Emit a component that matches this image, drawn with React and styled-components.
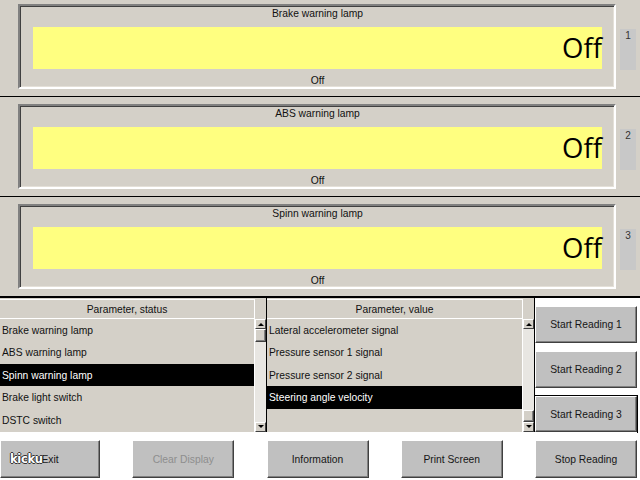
import React from 'react';
import styled, { createGlobalStyle } from 'styled-components';

const Global = createGlobalStyle`
  html, body { margin: 0; padding: 0; background: #ffffff; }
  body { font-family: "Liberation Sans", Arial, sans-serif; }
`;

const Screen = styled.div`
  position: relative;
  width: 640px;
  height: 480px;
  overflow: hidden;
  display: flex;
  flex-direction: column;
  background: #ffffff;
  font-family: "Liberation Sans", Arial, sans-serif;
  font-size: 10.3px;
  color: #000;
`;

const LampStack = styled.div`
  margin-top: -3px;
  display: flex;
  flex-direction: column;
`;

const LampPanel = styled.section`
  box-sizing: border-box;
  height: 100px;
  background: #d4d0c8;
  border-bottom: 1px solid #000;
  display: flex;
  align-items: flex-start;
  padding: 7px 0 0 18px;
`;

const LampBox = styled.div`
  box-sizing: border-box;
  width: 598px;
  height: 85px;
  border: 2px solid;
  border-color: #808080 #ffffff #ffffff #808080;
  box-shadow: inset 1px 1px #404040, inset -1px -1px #e4e0d8;
  display: flex;
  flex-direction: column;
  padding: 0 12px 0 13px;
`;

const LampTitle = styled.div`
  height: 21px;
  padding-top: 1px;
  box-sizing: border-box;
  line-height: 14px;
  text-align: center;
  color: #111;
`;

const LampDisplay = styled.div`
  height: 43px;
  background: #ffff80;
  display: flex;
  align-items: center;
  justify-content: flex-end;
  font-family: "Open Sans", "Noto Sans", sans-serif;
  font-size: 27.5px;
  line-height: 1;
  color: #000;
`;

const LampFooter = styled.div`
  margin-top: 6px;
  height: 12px;
  line-height: 12px;
  text-align: center;
  color: #111;
`;

const LampTab = styled.div`
  box-sizing: border-box;
  margin: 25px 0 0 4px;
  width: 16px;
  height: 41px;
  background: #c8c8c8;
  text-align: center;
  font-size: 10px;
  line-height: 12px;
  padding-top: 1px;
  color: #333;
`;

const DataArea = styled.div`
  box-sizing: border-box;
  height: 135px;
  border-top: 1px solid #000;
  display: grid;
  grid-template-columns: 267px 268px 1fr;
`;

const ListPane = styled.div`
  box-sizing: border-box;
  background: #d4d0c8;
  border-right: 1px solid #000;
  padding-top: 1px;
  display: grid;
  grid-template-columns: 1fr 12px;
  overflow: hidden;
`;

const ListBody = styled.div`
  display: flex;
  flex-direction: column;
`;

const ListHeader = styled.div`
  box-sizing: border-box;
  height: 20px;
  padding-top: 1px;
  line-height: 17px;
  border-top: 1px solid #ffffff;
  border-bottom: 1px solid #ffffff;
  text-align: center;
  color: #111;
`;

const ListRow = styled.div`
  box-sizing: border-box;
  height: 22.4px;
  padding-top: 2px;
  line-height: 20px;
  padding-left: 2px;
  white-space: nowrap;
  background: ${p => (p.$selected ? '#000' : 'transparent')};
  color: ${p => (p.$selected ? '#fff' : '#111')};
`;

const ScrollBar = styled.div`
  display: flex;
  flex-direction: column;
  border-left: 1px solid #ffffff;
  box-sizing: border-box;
`;

const ScrollHead = styled.div`
  height: 20px;
`;

const ScrollButton = styled.div`
  box-sizing: border-box;
  height: 10px;
  background: #d4d0c8;
  border: 1px solid;
  border-color: #ffffff #404040 #404040 #ffffff;
  display: flex;
  align-items: center;
  justify-content: center;
`;

const ScrollThumb = styled.div`
  box-sizing: border-box;
  height: ${p => p.$size}px;
  background: #d4d0c8;
  border: 1px solid;
  border-color: #ffffff #404040 #404040 #ffffff;
  box-shadow: inset -1px -1px #808080;
`;

const ScrollTrack = styled.div`
  flex: 1;
  background: #e8e6e2;
`;

const SideColumn = styled.div`
  background: #ffffff;
  display: flex;
  flex-direction: column;
  gap: 8px;
  padding: 8px 3px 0 0;
`;

const PanelButton = styled.button`
  box-sizing: border-box;
  width: ${p => p.$w}px;
  height: ${p => p.$h}px;
  margin: 0;
  padding: 0;
  background: #c0c0c0;
  border: 1px solid;
  border-color: #ffffff #404040 #404040 #ffffff;
  box-shadow: inset -1px -1px #808080${p => (p.$focused ? ', 0 0 0 1px #000' : '')};
  font-family: "Liberation Sans", Arial, sans-serif;
  font-size: 10.3px;
  color: ${p => (p.$disabled ? '#8e8e8e' : '#161616')};
  text-align: center;
  cursor: default;
`;

const BottomBar = styled.div`
  box-sizing: border-box;
  width: 637px;
  height: 48px;
  padding-top: 8px;
  display: flex;
  justify-content: space-between;
  align-items: flex-start;
  background: #ffffff;
`;

const Watermark = styled.div`
  position: absolute;
  left: 10px;
  top: 452px;
  font-family: "DejaVu Sans", sans-serif;
  font-weight: bold;
  font-size: 11.5px;
  color: #ffffff;
  text-shadow: 1px 0 #333, -1px 0 #333, 0 1px #333, 0 -1px #333;
  letter-spacing: -0.3px;
`;

const Arrow = ({ up }) => (
  <svg width="6" height="4" viewBox="0 0 6 4">
    <path d={up ? 'M0 4 L3 1 L6 4 Z' : 'M0 0 L3 3 L6 0 Z'} fill="#000" />
  </svg>
);

const lamps = [
  { name: 'Brake warning lamp', value: 'Off', tab: '1' },
  { name: 'ABS warning lamp', value: 'Off', tab: '2' },
  { name: 'Spinn warning lamp', value: 'Off', tab: '3' },
];

const statusRows = ['Brake warning lamp', 'ABS warning lamp', 'Spinn warning lamp', 'Brake light switch', 'DSTC switch'];
const valueRows = ['Lateral accelerometer signal', 'Pressure sensor 1 signal', 'Pressure sensor 2 signal', 'Steering angle velocity', ''];

const List = ({ title, rows, selected, thumbAtEnd }) => (
  <ListPane>
    <ListBody>
      <ListHeader>{title}</ListHeader>
      {rows.map((r, i) => (
        <ListRow key={i} $selected={i === selected}>{r}</ListRow>
      ))}
    </ListBody>
    <ScrollBar>
      <ScrollHead />
      <ScrollButton><Arrow up /></ScrollButton>
      {thumbAtEnd ? (
        <>
          <ScrollTrack />
          <ScrollThumb $size={12} />
        </>
      ) : (
        <>
          <ScrollThumb $size={13} />
          <ScrollTrack />
        </>
      )}
      <ScrollButton><Arrow /></ScrollButton>
    </ScrollBar>
  </ListPane>
);

export default function App() {
  return (
    <Screen>
      <Global />
      <LampStack>
        {lamps.map(l => (
          <LampPanel key={l.tab}>
            <LampBox>
              <LampTitle>{l.name}</LampTitle>
              <LampDisplay>{l.value}</LampDisplay>
              <LampFooter>{l.value}</LampFooter>
            </LampBox>
            <LampTab>{l.tab}</LampTab>
          </LampPanel>
        ))}
      </LampStack>
      <DataArea>
        <List title="Parameter, status" rows={statusRows} selected={2} />
        <List title="Parameter, value" rows={valueRows} selected={3} thumbAtEnd />
        <SideColumn>
          <PanelButton $w={102} $h={37}>Start Reading 1</PanelButton>
          <PanelButton $w={102} $h={37}>Start Reading 2</PanelButton>
          <PanelButton $w={102} $h={36} $focused>Start Reading 3</PanelButton>
        </SideColumn>
      </DataArea>
      <BottomBar>
        <PanelButton $w={100} $h={38}>Exit</PanelButton>
        <PanelButton $w={102} $h={38} $disabled>Clear Display</PanelButton>
        <PanelButton $w={102} $h={38}>Information</PanelButton>
        <PanelButton $w={102} $h={38}>Print Screen</PanelButton>
        <PanelButton $w={102} $h={38}>Stop Reading</PanelButton>
      </BottomBar>
      <Watermark>kicku</Watermark>
    </Screen>
  );
}
